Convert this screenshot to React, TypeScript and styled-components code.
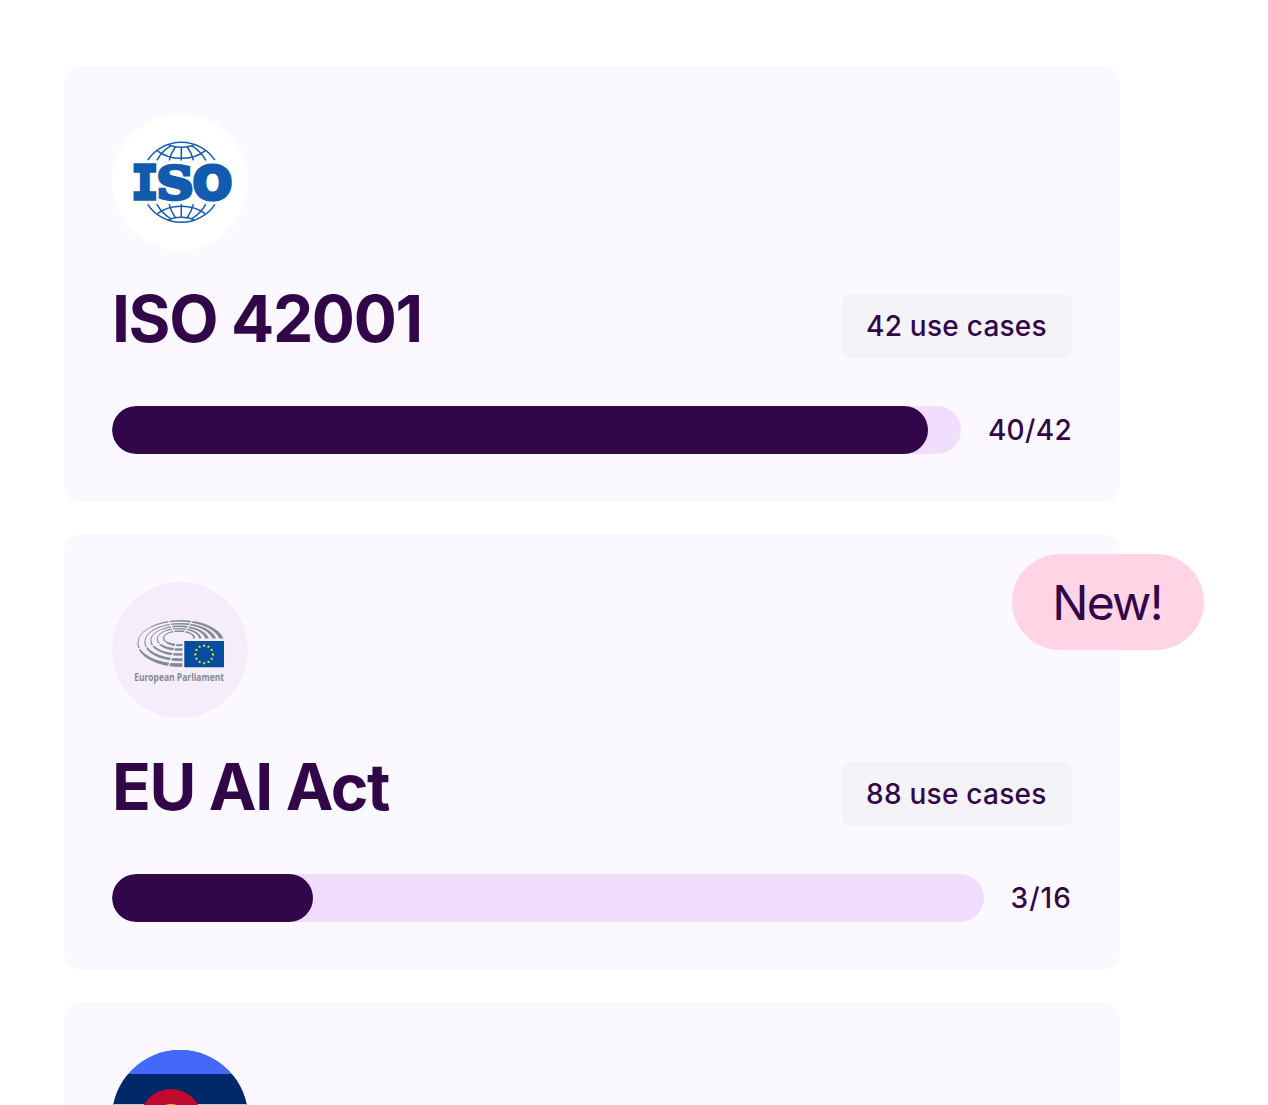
import * as React from "react"
import styled, { createGlobalStyle } from "styled-components"

const IsoLogo = () => (
  <svg width="136" height="136" viewBox="0 0 136 136" fill="none">
    <IsoGlobeHalf />
    <g transform="translate(0 136.5) scale(1 -1)">
      <IsoGlobeHalf />
    </g>
    <IsoText $font="DejaVu Sans Mono" $size={45.5} $stroke={3.6} transform="translate(19.4 85) scale(0.97 1)">I</IsoText>
    <IsoText $font="DejaVu Serif" $size={44.5} $stroke={3.6} transform="translate(44.8 85) scale(1.14 1)">S</IsoText>
    <IsoText $font="DejaVu Sans" $size={44} $stroke={4} transform="translate(80.9 84.8) scale(1.04 1)">O</IsoText>
  </svg>
)

const IsoGlobeHalf = () => (
  <g stroke="#125cb0" strokeWidth="1.5">
    <path d="M35.7 46.2A40.3 40.3 0 0 1 102.9 46.2" />
    <path d="M56 30.4C63 34.2 75.6 34.2 82.6 30.4" />
    <path d="M45.5 36.8C58 46.8 80.6 46.8 93.1 36.8" />
    <path d="M69.3 33.2V46.6M63.4 32.8Q59 39 57.2 46.4M75.2 32.8Q79.6 39 81.4 46.4" />
    <path d="M59.6 31.4Q50 36.8 44.8 46.4M79 31.4Q88.6 36.8 93.8 46.4" />
  </g>
)

// outer and inner edge of every row of seats: left, top, right, bottom
const rows = [
  [[25.3, 38, 112.5, 85], [26.3, 39.6, 108, 81.3]],
  [[32.3, 41, 104.8, 79.3], [33.3, 42.5, 101, 76.3]],
  [[38.3, 43.5, 97, 73.8], [39.3, 44.9, 93.5, 71.2]],
  [[44.7, 45.9, 89.6, 68.8], [45.8, 47.3, 87, 66.4]],
  [[51, 48.3, 83.2, 64.3], [52.2, 49.7, 81.2, 62.2]],
]

const ellipse = ([l, t, r, b]: number[]) => {
  const rx = (r - l) / 2
  const ry = (b - t) / 2
  const cy = (t + b) / 2
  return `M${l} ${cy}A${rx} ${ry} 0 1 1 ${r} ${cy}A${rx} ${ry} 0 1 1 ${l} ${cy}Z`
}

const star = (cx: number, cy: number, r: number) =>
  Array.from({ length: 10 }, (_, i) => {
    const a = (Math.PI / 5) * i - Math.PI / 2
    const d = i % 2 ? r * 0.5 : r
    return `${(cx + d * Math.cos(a)).toFixed(2)},${(cy + d * Math.sin(a)).toFixed(2)}`
  }).join(" ")

const ParliamentLogo = () => (
  <svg width="136" height="136" viewBox="0 0 136 136">
    {rows.map(([outer, inner], i) => (
      <path key={i} d={ellipse(outer) + ellipse(inner)} fill="#828b95" fillRule="evenodd" />
    ))}
    <g stroke="#f5edfc" strokeWidth="1.3">
      <path d="M56 37L62.5 51M81.5 37L72 51" />
      <path d="M24 67.4L54 60.4" />
      <path d="M56.5 85L64.5 60" />
    </g>
    <path d="M70.4 56.6H116V88H70.4Z" fill="#f5edfc" />
    <path d="M72.3 59H112V85.3H72.3Z" fill="#034ea2" />
    {Array.from({ length: 12 }, (_, i) => {
      const a = (Math.PI / 6) * i
      return (
        <polygon
          key={i}
          points={star(92.1 + 8.8 * Math.sin(a), 72.4 - 8.8 * Math.cos(a), 1.6)}
          fill="#fff200"
        />
      )
    })}
    <ParliamentText x="22.2" y="98.7" textLength="89.8" lengthAdjust="spacingAndGlyphs">
      European Parliament
    </ParliamentText>
  </svg>
)

const ColoradoLogo = () => (
  <svg width="136" height="136" viewBox="0 0 136 136">
    <path d="M0 0H136V136H0Z" fill="#4468fa" />
    <path d="M0 24H136V112H0Z" fill="#002868" />
    <path d="M0 54.2H136V82H0Z" fill="#fff" />
    <circle cx="59" cy="70" r="31" fill="#bf0a30" />
    <circle cx="59" cy="70" r="16" fill="#ffb81c" />
  </svg>
)

const frameworks = [
  {
    id: "iso",
    logo: <IsoLogo />,
    logoBg: "#fff",
    details: { name: "ISO 42001", cases: 42, done: "40/42", progress: 96.12, tracking: 0.012 },
  },
  {
    id: "eu",
    logo: <ParliamentLogo />,
    logoBg: "#f5edfc",
    isNew: true,
    details: { name: "EU AI Act", cases: 88, done: "3/16", progress: 23.1, tracking: 0.038 },
  },
  { id: "colorado", logo: <ColoradoLogo />, logoBg: "#4468fa" },
]

const App = () => (
  <Page>
    <GlobalStyle />
    {frameworks.map(({ id, logo, logoBg, isNew, details }) => (
      <Card key={id}>
        {isNew && <NewBadge>New!</NewBadge>}
        <Logo $bg={logoBg}>{logo}</Logo>
        {details && (
          <>
            <TitleRow>
              <Title>{details.name}</Title>
              <Chip>{details.cases} use cases</Chip>
            </TitleRow>
            <ProgressRow>
              <Track>
                <Fill style={{ width: `${details.progress}%` }} />
              </Track>
              <Count $tracking={details.tracking}>{details.done}</Count>
            </ProgressRow>
          </>
        )}
      </Card>
    ))}
  </Page>
)

export default App

const GlobalStyle = createGlobalStyle`
* {
  box-sizing: border-box;
}
body {
  margin: 0;
  background: #fff;
  color: #31074a;
  font-family: Inter, "Liberation Sans", sans-serif;
}
`

const Page = styled.main`
height: 1105px;
overflow: hidden;
padding: 66px 148px 0 64px;
display: flex;
flex-direction: column;
gap: 32px;
`

const Card = styled.section`
position: relative;
flex: none;
min-height: 436px;
padding: 48px;
border-radius: 16px;
background: #fbf9ff;
`

const Logo = styled.div<{ $bg: string }>`
width: 136px;
height: 136px;
border-radius: 50%;
background: ${({ $bg }) => $bg};

svg {
  display: block;
  border-radius: 50%;
}
`

const TitleRow = styled.div`
display: flex;
align-items: flex-start;
justify-content: space-between;
margin-top: 44px;
`

const Title = styled.h2`
margin: 0;
font-size: 64px;
font-weight: 700;
line-height: 50px;
letter-spacing: -0.021em;
`

const Chip = styled.span`
width: 230px;
height: 64px;
padding-left: 24px;
border-radius: 8px;
background: #f4f3f8;
font-size: 28px;
font-weight: 450;
line-height: 64px;
letter-spacing: 0.009em;
`

const ProgressRow = styled.div`
display: flex;
align-items: center;
gap: 27px;
margin-top: 48px;
`

const Track = styled.div`
flex: 1;
height: 48px;
border-radius: 24px;
background: #f1deff;
overflow: hidden;
`

const Fill = styled.div`
height: 100%;
border-radius: 24px;
background: #31074a;
`

const Count = styled.span<{ $tracking: number }>`
font-size: 28px;
font-weight: 450;
font-kerning: none;
line-height: 48px;
letter-spacing: ${({ $tracking }) => $tracking}em;
`

const NewBadge = styled.span`
position: absolute;
top: 20px;
right: -84px;
width: 192px;
height: 96px;
padding: 1px 2px 0 0;
border-radius: 48px;
background: #ffd4e4;
font-size: 48px;
font-weight: 400;
line-height: 96px;
letter-spacing: -0.035em;
text-align: center;
`

const IsoText = styled.text<{ $font: string; $size: number; $stroke: number }>`
fill: #125cb0;
stroke: #125cb0;
stroke-width: ${({ $stroke }) => $stroke}px;
font-family: "${({ $font }) => $font}", serif;
font-weight: 700;
font-size: ${({ $size }) => $size}px;
`

const ParliamentText = styled.text`
fill: #828b95;
font-family: "Open Sans", sans-serif;
font-weight: 700;
font-size: 10.8px;
`
